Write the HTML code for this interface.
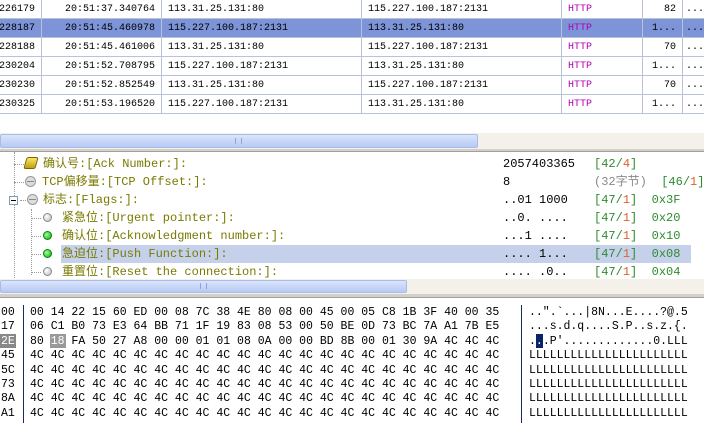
<!DOCTYPE html>
<html><head><meta charset="utf-8"><style>
*{margin:0;padding:0;box-sizing:border-box}
body{width:704px;height:423px;background:#fff;position:relative;overflow:hidden;font-family:"Liberation Mono","Noto Sans CJK SC",monospace}
.a{position:absolute;white-space:pre}
.row{position:absolute;left:0;width:704px;height:19px;border-bottom:1px solid #b9c3d8;font-size:10px;color:#000}
.row span{position:absolute;top:4px}
.sel{background:#7d94d8}
.vl{position:absolute;top:0;width:1px;height:114px;background:#b9c3d8}
.http{color:#b000b0}
.t{position:absolute;font-size:12px;line-height:14px;color:#7a7a00;white-space:pre}
.g{color:#2e8b2e}.o{color:#e06030}.k{color:#000}.gr{color:#888}
.hx{position:absolute;font-size:11.5px;white-space:pre;color:#000;line-height:14.4px}
</style></head><body>
<div class="row" style="top:0"><span style="left:-1px">226179</span><span style="left:65px">20:51:37.340764</span><span style="left:168px">113.31.25.131:80</span><span style="left:368px">115.227.100.187:2131</span><span class="http" style="left:568px">HTTP</span><span style="left:664px">82</span><span style="left:686px">...</span></div>
<div class="row sel" style="top:19px"><span style="left:-1px">228187</span><span style="left:65px">20:51:45.460978</span><span style="left:168px">115.227.100.187:2131</span><span style="left:368px">113.31.25.131:80</span><span class="http" style="left:568px">HTTP</span><span style="left:652px">1...</span><span style="left:686px">...</span></div>
<div class="row" style="top:38px"><span style="left:-1px">228188</span><span style="left:65px">20:51:45.461006</span><span style="left:168px">113.31.25.131:80</span><span style="left:368px">115.227.100.187:2131</span><span class="http" style="left:568px">HTTP</span><span style="left:664px">70</span><span style="left:686px">...</span></div>
<div class="row" style="top:57px"><span style="left:-1px">230204</span><span style="left:65px">20:51:52.708795</span><span style="left:168px">115.227.100.187:2131</span><span style="left:368px">113.31.25.131:80</span><span class="http" style="left:568px">HTTP</span><span style="left:652px">1...</span><span style="left:686px">...</span></div>
<div class="row" style="top:76px"><span style="left:-1px">230230</span><span style="left:65px">20:51:52.852549</span><span style="left:168px">113.31.25.131:80</span><span style="left:368px">115.227.100.187:2131</span><span class="http" style="left:568px">HTTP</span><span style="left:664px">70</span><span style="left:686px">...</span></div>
<div class="row" style="top:95px"><span style="left:-1px">230325</span><span style="left:65px">20:51:53.196520</span><span style="left:168px">115.227.100.187:2131</span><span style="left:368px">113.31.25.131:80</span><span class="http" style="left:568px">HTTP</span><span style="left:652px">1...</span><span style="left:686px">...</span></div>
<div class="vl" style="left:41px"></div><div class="vl" style="left:161px"></div><div class="vl" style="left:361px"></div><div class="vl" style="left:561px"></div><div class="vl" style="left:642px"></div><div class="vl" style="left:682px"></div>
<div class="a" style="left:0;top:133px;width:704px;height:16px;background:#f3f1ea"></div>
<div class="a" style="left:0;top:134px;width:478px;height:14px;background:linear-gradient(#dbe5fb,#b6c9f5);border:1px solid #a9bce6;border-radius:2px"></div>
<div class="a" style="left:235px;top:138px;width:7px;height:6px;border-left:1px solid #8ea4d8;border-right:1px solid #8ea4d8"></div>
<div class="a" style="left:0;top:149px;width:704px;height:3px;background:#d4d0c8;border-bottom:1px solid #a0a0a0"></div>
<div class="a" style="left:14px;top:152px;height:128px;border-left:1px dotted #999"></div>
<div class="a" style="left:31px;top:209px;height:66px;border-left:1px dotted #999"></div>
<div class="a" style="left:14px;top:164px;width:12px;border-top:1px dotted #999"></div>
<div class="a" style="left:14px;top:182px;width:10px;border-top:1px dotted #999"></div>
<div class="a" style="left:20px;top:200px;width:6px;border-top:1px dotted #999"></div>
<div class="a" style="left:31px;top:218px;width:10px;border-top:1px dotted #999"></div>
<div class="a" style="left:31px;top:236px;width:10px;border-top:1px dotted #999"></div>
<div class="a" style="left:31px;top:254px;width:10px;border-top:1px dotted #999"></div>
<div class="a" style="left:31px;top:272px;width:10px;border-top:1px dotted #999"></div>
<div class="a" style="left:9px;top:196px;width:9px;height:9px;border:1px solid #7f9db9;background:#fff"></div>
<div class="a" style="left:11px;top:200px;width:5px;height:1px;background:#000"></div>
<div class="a" style="left:25px;top:157px;width:12px;height:12px;background:linear-gradient(#f8e860,#c0a010);border:1px solid #806000;border-radius:2px;transform:skewX(-15deg)"></div>
<div class="a" style="left:25px;top:176px;width:11px;height:11px;border-radius:50%;background:#ddd;border:1px solid #999"></div>
<div class="a" style="left:27px;top:181px;width:7px;height:1px;background:#888"></div>
<div class="a" style="left:27px;top:194px;width:11px;height:11px;border-radius:50%;background:#ddd;border:1px solid #999"></div>
<div class="a" style="left:29px;top:199px;width:7px;height:1px;background:#888"></div>
<div class="a" style="left:43px;top:213px;width:9px;height:9px;border-radius:50%;background:radial-gradient(circle at 35% 35%,#fff,#bbb);border:1px solid #888"></div>
<div class="a" style="left:43px;top:231px;width:9px;height:9px;border-radius:50%;background:radial-gradient(circle at 35% 35%,#9f9,#1a1);border:1px solid #080"></div>
<div class="a" style="left:43px;top:249px;width:9px;height:9px;border-radius:50%;background:radial-gradient(circle at 35% 35%,#9f9,#1a1);border:1px solid #080"></div>
<div class="a" style="left:43px;top:267px;width:9px;height:9px;border-radius:50%;background:radial-gradient(circle at 35% 35%,#fff,#bbb);border:1px solid #888"></div>
<div class="a" style="left:61px;top:245px;width:630px;height:18px;background:#c5d1ea"></div>
<div class="t" style="left:43px;top:157px">确认号:[Ack Number:]:</div>
<div class="t" style="left:42px;top:175px">TCP偏移量:[TCP Offset:]:</div>
<div class="t" style="left:43px;top:193px">标志:[Flags:]:</div>
<div class="t" style="left:62px;top:211px">紧急位:[Urgent pointer:]:</div>
<div class="t" style="left:62px;top:229px">确认位:[Acknowledgment number:]:</div>
<div class="t" style="left:62px;top:247px">急迫位:[Push Function:]:</div>
<div class="t" style="left:62px;top:265px">重置位:[Reset the connection:]:</div>
<div class="t k" style="left:503px;top:157px">2057403365</div><div class="t g" style="left:594px;top:157px">[42/<span class="o">4</span>]</div>
<div class="t k" style="left:503px;top:175px">8</div><div class="t gr" style="left:594px;top:175px">(32字节)  <span class="g">[46/<span class="o">1</span>]</span></div>
<div class="t k" style="left:503px;top:193px">..01 1000</div><div class="t g" style="left:594px;top:193px">[47/<span class="o">1</span>]  0x3F</div>
<div class="t k" style="left:503px;top:211px">..0. ....</div><div class="t g" style="left:594px;top:211px">[47/<span class="o">1</span>]  0x20</div>
<div class="t k" style="left:503px;top:229px">...1 ....</div><div class="t g" style="left:594px;top:229px">[47/<span class="o">1</span>]  0x10</div>
<div class="t k" style="left:503px;top:247px">.... 1...</div><div class="t g" style="left:594px;top:247px">[47/<span class="o">1</span>]  0x08</div>
<div class="t k" style="left:503px;top:265px">.... .0..</div><div class="t g" style="left:594px;top:265px">[47/<span class="o">1</span>]  0x04</div>
<div class="a" style="left:0;top:279px;width:704px;height:15px;background:#f3f1ea"></div>
<div class="a" style="left:0;top:280px;width:407px;height:13px;background:linear-gradient(#dbe5fb,#b6c9f5);border:1px solid #a9bce6;border-radius:2px"></div>
<div class="a" style="left:200px;top:283px;width:7px;height:6px;border-left:1px solid #8ea4d8;border-right:1px solid #8ea4d8"></div>
<div class="a" style="left:0;top:294px;width:704px;height:4px;background:#d4d0c8;border-bottom:1px solid #a0a0a0"></div>
<div class="a" style="left:23px;top:305px;width:1px;height:118px;background:#1a2a5a"></div>
<div class="a" style="left:521px;top:305px;width:1px;height:118px;background:#1a2a5a"></div>
<div class="a" style="left:0;top:334px;width:16px;height:14px;background:#888"></div>
<div class="a" style="left:50px;top:334px;width:16px;height:14px;background:#999"></div>
<div class="a" style="left:536px;top:334px;width:7px;height:14px;background:#0a246a"></div>
<div class="hx" style="left:1px;top:306px">00
17
<span style="color:#fff">2E</span>
45
5C
73
8A
A1</div>
<div class="hx" style="left:30px;top:306px">00 14 22 15 60 ED 00 08 7C 38 4E 80 08 00 45 00 05 C8 1B 3F 40 00 35
06 C1 B0 73 E3 64 BB 71 1F 19 83 08 53 00 50 BE 0D 73 BC 7A A1 7B E5
80 <span style="color:#fff">18</span> FA 50 27 A8 00 00 01 01 08 0A 00 00 BD 8B 00 01 30 9A 4C 4C 4C
4C 4C 4C 4C 4C 4C 4C 4C 4C 4C 4C 4C 4C 4C 4C 4C 4C 4C 4C 4C 4C 4C 4C
4C 4C 4C 4C 4C 4C 4C 4C 4C 4C 4C 4C 4C 4C 4C 4C 4C 4C 4C 4C 4C 4C 4C
4C 4C 4C 4C 4C 4C 4C 4C 4C 4C 4C 4C 4C 4C 4C 4C 4C 4C 4C 4C 4C 4C 4C
4C 4C 4C 4C 4C 4C 4C 4C 4C 4C 4C 4C 4C 4C 4C 4C 4C 4C 4C 4C 4C 4C 4C
4C 4C 4C 4C 4C 4C 4C 4C 4C 4C 4C 4C 4C 4C 4C 4C 4C 4C 4C 4C 4C 4C 4C</div>
<div class="hx" style="left:529px;top:306px">..".`...|8N...E....?@.5
...s.d.q....S.P..s.z.{.
.<span style="color:#fff">.</span>.P'.............0.LLL
LLLLLLLLLLLLLLLLLLLLLLL
LLLLLLLLLLLLLLLLLLLLLLL
LLLLLLLLLLLLLLLLLLLLLLL
LLLLLLLLLLLLLLLLLLLLLLL
LLLLLLLLLLLLLLLLLLLLLLL</div>
</body></html>
